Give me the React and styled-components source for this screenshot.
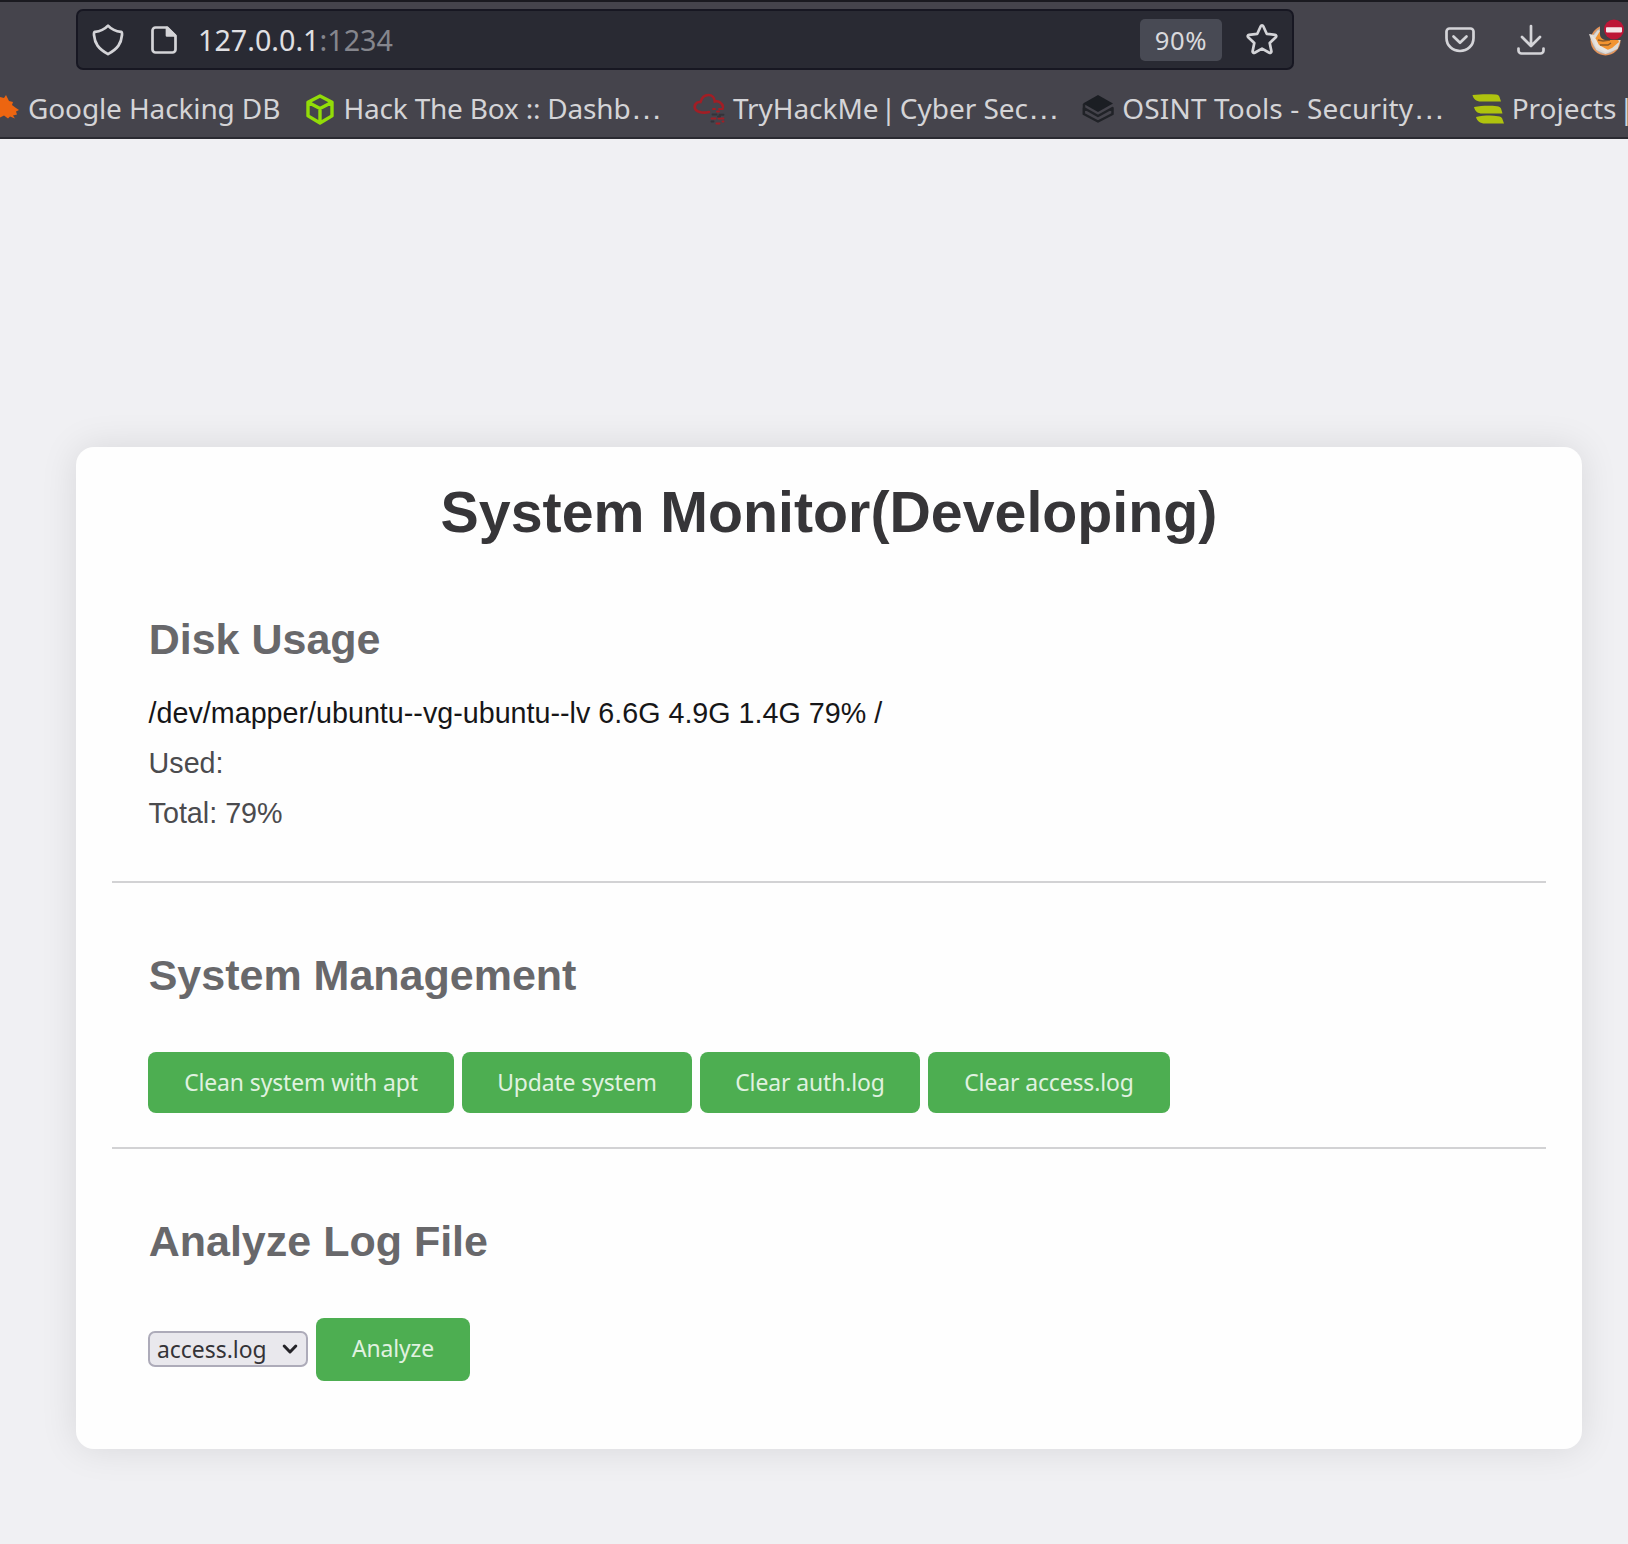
import React from "react";
import styled, { createGlobalStyle } from "styled-components";

const Global = createGlobalStyle`
  * { box-sizing: border-box; }
  html, body { margin: 0; background: #f0f0f3; }
  body { overflow: hidden; font-family: "Liberation Sans", Arial, sans-serif; }
`;

const uiFont = `"Noto Sans", "Open Sans", sans-serif`;

const Window = styled.div`
  width: 1628px;
  height: 1544px;
  overflow: hidden;
`;

const Chrome = styled.header`
  height: 139px;
  background: #45444c;
  border-top: 2px solid #1a1a20;
  border-bottom: 2px solid #2a2a31;
  font-family: ${uiFont};
  color: #d4d4d7;
`;

const Toolbar = styled.div`
  display: flex;
  align-items: center;
  height: 75px;
  padding-left: 76px;
`;

const UrlBar = styled.div`
  display: flex;
  align-items: center;
  flex: none;
  width: 1218px;
  height: 61px;
  padding: 0 13px 0 13px;
  border: 2px solid #171722;
  border-radius: 7px;
  background: #292a33;
`;

const Url = styled.div`
  flex: 1;
  padding-top: 1px;
  font-size: 28.7px;
  line-height: 40px;
  color: #e0e0e3;
`;

const Port = styled.span`
  color: #85868d;
`;

const ZoomLevel = styled.div`
  width: 82px;
  height: 42px;
  margin-right: 23px;
  padding-top: 1px;
  border-radius: 5px;
  background: #484a54;
  font-size: 25.6px;
  line-height: 42px;
  letter-spacing: 0.6px;
  text-align: center;
  color: #d9d9dc;
`;

const Actions = styled.div`
  display: flex;
  align-items: center;
  flex: none;
  gap: 39px;
  margin-left: 150px;
`;

const Icon = styled.svg`
  display: block;
  flex: none;
  width: ${(p) => p.$w || 32}px;
  height: ${(p) => p.$h || 32}px;
  margin-left: ${(p) => p.$before || 0}px;
  margin-right: ${(p) => p.$after || 0}px;
  overflow: visible;
`;

const Bookmarks = styled.nav`
  display: flex;
  align-items: center;
  height: 60px;
  margin-left: -12px;
  padding-top: 3px;
`;

const Bookmark = styled.div`
  display: flex;
  align-items: center;
  flex: none;
  gap: 8px;
  width: ${(p) => p.$width || 389.4}px;
`;

const BookmarkLabel = styled.span`
  padding-bottom: 2px;
  font-size: 28px;
  line-height: 40px;
  letter-spacing: ${(p) => p.$spacing || 0}px;
  white-space: nowrap;
`;

const Pipe = styled.span`
  margin: 0 -3.5px 0 -5px;
`;

const Ellipsis = styled.span`
  font-family: "Liberation Sans", Arial, sans-serif;
  font-size: 32px;
  line-height: 1;
`;

const Page = styled.main`
  padding: 308px 0 0 76px;
`;

const Card = styled.div`
  width: 1506px;
  height: 1002px;
  padding: 32px 36px 0;
  border-radius: 18px;
  background: #fefefe;
  box-shadow: 0 0 37px rgba(0, 0, 0, 0.1);
`;

const Title = styled.h1`
  margin: 0 0 33px;
  font-size: 57.3px;
  line-height: 66px;
  text-align: center;
  color: #363538;
`;

const Section = styled.section`
  height: ${(p) => p.$height}px;
  padding: 36px 36px 0;
  ${(p) => p.$divided && "border-bottom: 2px solid #d2d2d4;"}
`;

const Heading = styled.h2`
  margin: 0 0 ${(p) => p.$after}px;
  padding-top: ${(p) => p.$before || 0}px;
  padding-left: 0.7px;
  font-size: 43px;
  line-height: 50px;
  color: #68686b;
`;

const Line = styled.p`
  margin: 0;
  padding-left: 0.6px;
  font-size: 28.7px;
  line-height: 50px;
  color: ${(p) => (p.$muted ? "#4b4b4e" : "#161618")};
`;

const Controls = styled.div`
  display: flex;
  align-items: center;
  gap: 8px;
`;

const Button = styled.button`
  width: ${(p) => p.$width}px;
  height: ${(p) => p.$height || 61}px;
  padding: 0 0 1px;
  border: 0;
  border-radius: 8px;
  background: #4dae51;
  font-family: ${uiFont};
  font-size: 22.9px;
  letter-spacing: -0.1px;
  color: #e0f2e0;
  white-space: nowrap;
`;

const Picker = styled.button`
  display: flex;
  align-items: center;
  justify-content: space-between;
  width: 160px;
  height: 36px;
  padding: 2px 8px 0 7px;
  border: 2px solid #adabb9;
  border-radius: 7px;
  background: #e9e8ed;
  font-family: ${uiFont};
  font-size: 22.9px;
  line-height: 30px;
  color: #343337;
`;

const stroke = {
  fill: "none",
  stroke: "#d4d4d8",
  strokeWidth: 2.7,
  strokeLinecap: "round",
  strokeLinejoin: "round",
};

const Shield = () => (
  <Icon $w={34} $h={34} viewBox="0 0 34 34" {...stroke}>
    <path d="M17 2.7C13.5 6.5 8.5 8.5 4 8.8 3 9.2 2.8 10 3 12c.8 8.5 4 13.5 14 19.2C27 25.5 30.2 20.5 31 12c.2-2 0-2.8-1-3.2C25.5 8.5 20.5 6.5 17 2.7Z" />
  </Icon>
);

const Doc = () => (
  <Icon $w={28} $h={30} $before={25} $after={20} viewBox="0 0 28 30" {...stroke}>
    <path d="M17 2.5H5.500a3 3 0 0 0-3 3v19a3 3 0 0 0 3 3h17a3 3 0 0 0 3-3V11Z" />
    <path d="M17 3v7.5h8Z" fill="#d4d4d8" />
  </Icon>
);

const Star = () => (
  <Icon $w={34} $h={34} viewBox="0 0 34 34" {...stroke}>
    <path d="M15.7 3.2c.5-1.1 2.1-1.1 2.6 0l3.4 7.6 8.3 1c1.2.2 1.7 1.6.8 2.5l-6.1 5.7 1.7 8.2c.2 1.2-1 2.1-2.100 1.5L17 25.600l-7.300 4.100c-1.100.6-2.300-.3-2.100-1.500l1.700-8.200-6.100-5.700c-.9-.9-.4-2.300.8-2.500l8.300-1Z" />
  </Icon>
);

const Pocket = () => (
  <Icon $w={32} $h={30} viewBox="0 0 32 30" {...stroke}>
    <path d="M5.5 3.5h21a3 3 0 0 1 3 3v6.500c0 7.500-6 13-13.500 13S2.500 20.500 2.500 13V6.500a3 3 0 0 1 3-3Z" />
    <path d="m9.500 11.500 6.500 6.300 6.500-6.300" />
  </Icon>
);

const Download = () => (
  <Icon $w={32} $h={32} viewBox="0 0 32 32" {...stroke}>
    <path d="M16 2v19.500M7 13l9 9 9-9M3.500 24.500v2a3 3 0 0 0 3 3h19a3 3 0 0 0 3-3v-2" />
  </Icon>
);

const Fox = () => (
  <Icon $w={40} $h={40} $before={2} viewBox="0 0 40 40">
    <circle cx="17.5" cy="20.500" r="15" fill="#e6955a" />
    <circle cx="17.5" cy="20.500" r="13.300" fill="#b5b3b3" />
    <path d="M1 14 6 15l4-5 6 3 15 1 1.500 6-3 9-12 5-9-4-5-9Z" fill="#dedbd7" />
    <path d="M7 19 12 11l6 5 11 1 2 5-7 6-7 3-8-6Z" fill="#f29432" />
    <path d="m2 14 4 7 2 6 9 5 5-1-11-6-3-6Z" fill="#e9e4df" />
    <path d="m10 20 5 1 7-1m-10 5 8 0 3-2" fill="none" stroke="#8a5a2a" strokeWidth="1.500" />
    <path d="M12 0h28v20H19c-4 0-7-2-7-6Z" fill="#424147" />
    <circle cx="26" cy="9.500" r="10" fill="#bd1637" />
    <rect x="18" y="7.200" width="16" height="5.200" rx=".8" fill="#f4e7ea" />
  </Icon>
);

const Bird = () => (
  <Icon viewBox="0 0 32 32">
    <path d="M0 8l12-4 4 1 2-3 3 6 4 1-1 3 4 3 3 2-3 1.500 1 3-4 1 2 3-5-2-2 2-4-3-4 2-3-2-9 2Z" fill="#ed6510" />
  </Icon>
);

const Cube = () => (
  <Icon viewBox="0 0 32 32" fill="none" stroke="#92dc08" strokeWidth="3.400" strokeLinejoin="round" strokeLinecap="round">
    <path d="m16 3 12 6.300v13.600L16 30 4 22.900V9.300ZM4.500 9.500 16 15.500l11.500-6M16 15.500V29" />
  </Icon>
);

const Cloud = () => (
  <Icon viewBox="0 0 32 32" fill="none" stroke="#a11e25" strokeWidth="2.600" strokeLinecap="round">
    <path d="M16 19c-4 1-11 1-13.500-2.500C0 12 4 8.500 7.500 9 9 3.500 12 2 15.500 2s6 3 6.300 6.500c3.500-1 7.500 1.500 8.200 5.500" />
    <path d="M20 16h2m4 0h4M24 18.500h2M18.500 25.500h4m3 0h5M23.500 30.500h3m3-2h1" strokeWidth="1.900" />
    <path d="M19.500 21.500h4m3 .300h4M25 23.500h2M18.500 28.500h2" stroke="#343339" strokeWidth="1.900" />
  </Icon>
);

const Layers = () => (
  <Icon viewBox="0 0 32 32">
    <path d="M16 2 31 10.500 16 19 1 10.500Z" fill="#1b1e23" />
    <path
      d="M2 11v4.500M1.800 15l14.200 8L30.500 15v6L16 28.500 1.800 21Z"
      fill="none"
      stroke="#202227"
      strokeWidth="2.500"
      strokeLinejoin="round"
    />
  </Icon>
);

const Stripes = () => (
  <Icon viewBox="0 0 32 32" fill="#afc30e">
    <path d="M.5 2C8 1 17 1 24 1.500c2 0 3 1 3.500 2.500L29 8.500H9C4 8.500 1.500 6 .5 2Z" />
    <path d="M2 14c8-1.500 16-1.500 23-.8 2 .2 3.500 1 4 2.300l1.500 5H10c-4 0-7-2-8-6.500Z" />
    <path d="M4 24c8-1.500 15-1.800 22-.8 2.500.3 3.700 1 4.200 2.300L32 30.500H13c-5 0-8-2.500-9-6.500Z" />
  </Icon>
);

const Chevron = () => (
  <Icon $w={16} $h={12} viewBox="0 0 16 12" fill="none" stroke="#242328" strokeWidth="3" strokeLinecap="round" strokeLinejoin="round">
    <path d="m2.200 2 5.800 6 5.800-6" />
  </Icon>
);

const bookmarks = [
  { text: "Google Hacking DB", icon: Bird, width: 315.5, spacing: -0.12 },
  { text: "Hack The Box :: Dashb", more: true, icon: Cube, spacing: -0.2 },
  { text: "TryHackMe | Cyber Sec", more: true, icon: Cloud, spacing: -0.05 },
  { text: "OSINT Tools - Security", more: true, icon: Layers, spacing: 0.15 },
  { text: "Projects |", icon: Stripes },
];

const actions = [
  { label: "Clean system with apt", width: 306 },
  { label: "Update system", width: 230 },
  { label: "Clear auth.log", width: 220 },
  { label: "Clear access.log", width: 242 },
];

function BookmarkText({ text, more, spacing }) {
  const [before, after] = text.split("|");
  return (
    <BookmarkLabel $spacing={spacing}>
      {before}
      {after !== undefined && <Pipe>|</Pipe>}
      {after}
      {more && <Ellipsis>…</Ellipsis>}
    </BookmarkLabel>
  );
}

export default function App() {
  return (
    <Window>
      <Global />
      <Chrome>
        <Toolbar>
          <UrlBar>
            <Shield />
            <Doc />
            <Url>
              127.0.0.1<Port>:1234</Port>
            </Url>
            <ZoomLevel>90%</ZoomLevel>
            <Star />
          </UrlBar>
          <Actions>
            <Pocket />
            <Download />
            <Fox />
          </Actions>
        </Toolbar>
        <Bookmarks>
          {bookmarks.map(({ icon: Mark, width, ...label }) => (
            <Bookmark key={label.text} $width={width}>
              <Mark />
              <BookmarkText {...label} />
            </Bookmark>
          ))}
        </Bookmarks>
      </Chrome>
      <Page>
        <Card>
          <Title>System Monitor(Developing)</Title>
          <Section $height={305} $divided>
            <Heading $after={24}>Disk Usage</Heading>
            <Line>/dev/mapper/ubuntu--vg-ubuntu--lv 6.6G 4.9G 1.4G 79% /</Line>
            <Line $muted>Used:</Line>
            <Line $muted>Total: 79%</Line>
          </Section>
          <Section $height={266} $divided>
            <Heading $before={31} $after={52}>System Management</Heading>
            <Controls>
              {actions.map((a) => (
                <Button key={a.label} $width={a.width}>{a.label}</Button>
              ))}
            </Controls>
          </Section>
          <Section $height={260}>
            <Heading $before={31} $after={51.5}>Analyze Log File</Heading>
            <Controls>
              <Picker>
                access.log
                <Chevron />
              </Picker>
              <Button $width={154} $height={63}>Analyze</Button>
            </Controls>
          </Section>
        </Card>
      </Page>
    </Window>
  );
}
